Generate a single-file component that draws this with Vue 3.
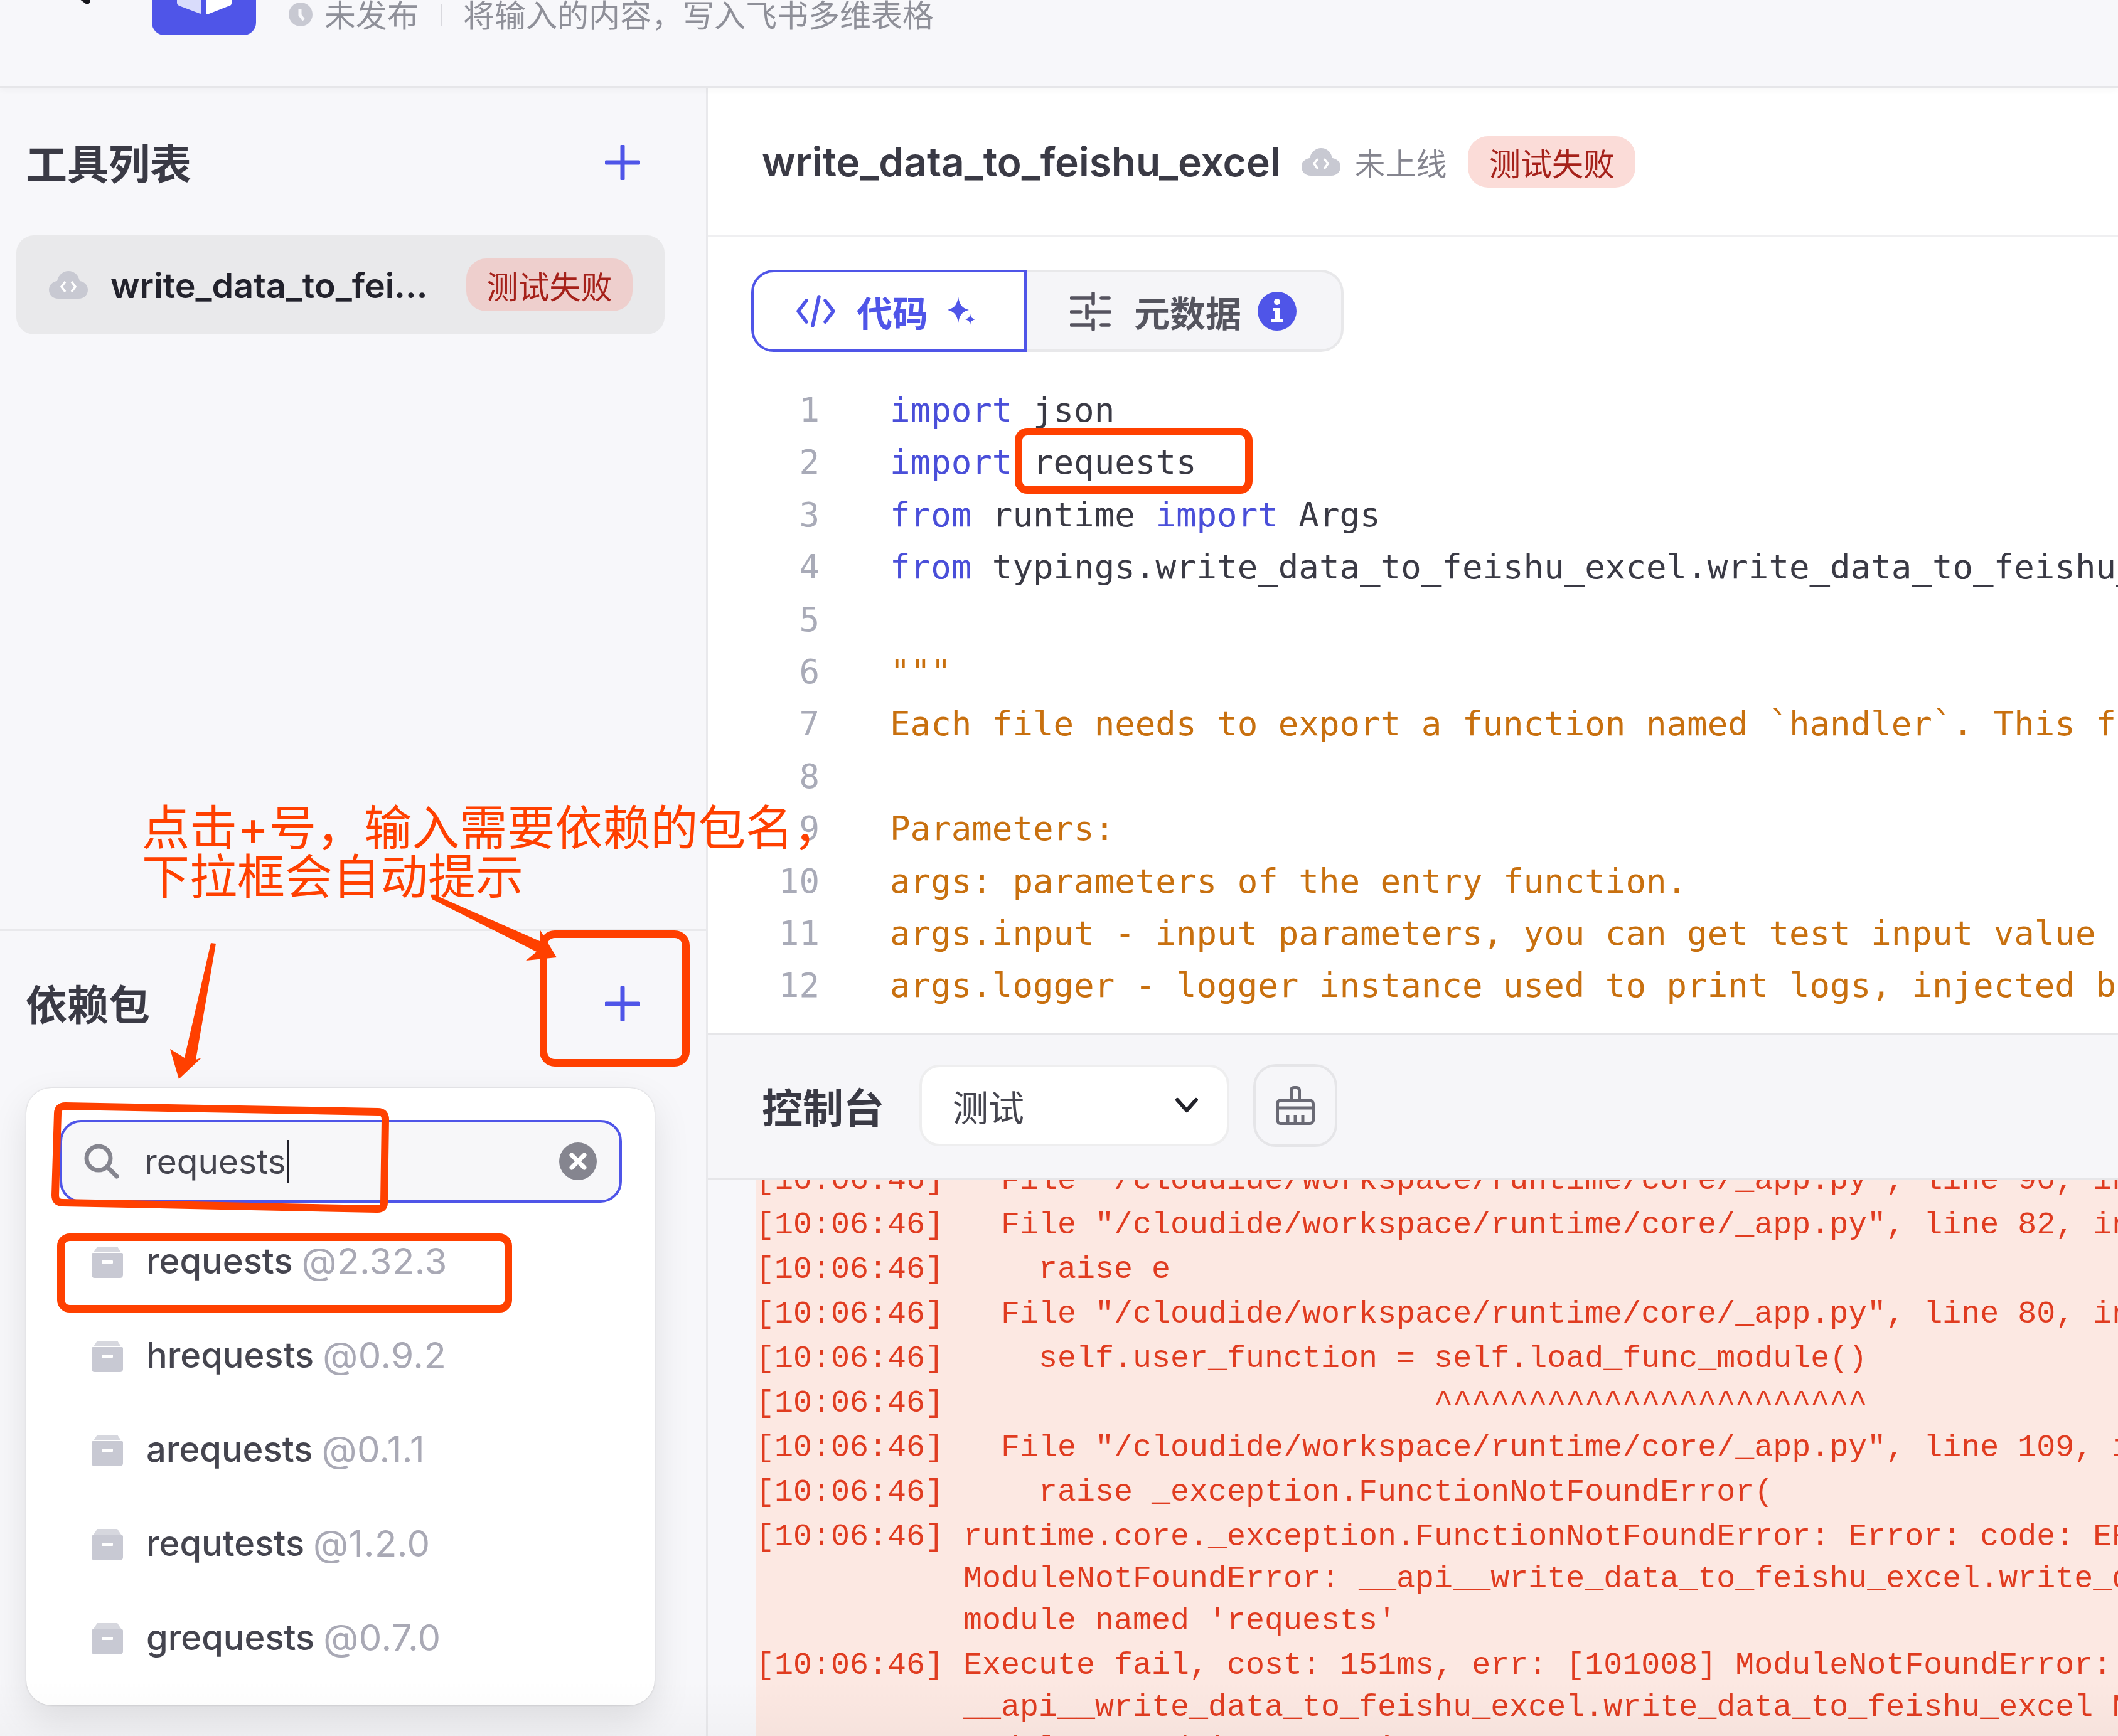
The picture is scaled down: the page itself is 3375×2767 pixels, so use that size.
<script setup>
const S = 'str'
const K = 'kw'
const code = [
  [['import', K], [' json']],
  [['import', K], [' requests']],
  [['from', K], [' runtime '], ['import', K], [' Args']],
  [['from', K], [' typings.write_data_to_feishu_excel.write_data_to_feishu_excel '], ['import', K], [' Input']],
  [],
  [['"""', S]],
  [['Each file needs to export a function named `handler`. This function is the entrance to the Tool.', S]],
  [],
  [['Parameters:', S]],
  [['args: parameters of the entry function.', S]],
  [['args.input - input parameters, you can get test input value by args.input.xxx.', S]],
  [['args.logger - logger instance used to print logs, injected by runtime.', S]]
]
const logs = [
  ['  File "/cloudide/workspace/runtime/core/_app.py", line 90, in __init__'],
  ['  File "/cloudide/workspace/runtime/core/_app.py", line 82, in __init__'],
  ['    raise e'],
  ['  File "/cloudide/workspace/runtime/core/_app.py", line 80, in __init__'],
  ['    self.user_function = self.load_func_module()'],
  ['                         ^^^^^^^^^^^^^^^^^^^^^^^'],
  ['  File "/cloudide/workspace/runtime/core/_app.py", line 109, in load_func_module'],
  ['    raise _exception.FunctionNotFoundError('],
  ['runtime.core._exception.FunctionNotFoundError: Error: code: ERR_FUNCTION_NOT_FOUND',
   'ModuleNotFoundError: __api__write_data_to_feishu_excel.write_data_to_feishu_excel No',
   "module named 'requests'"],
  ['Execute fail, cost: 151ms, err: [101008] ModuleNotFoundError:',
   '__api__write_data_to_feishu_excel.write_data_to_feishu_excel No',
   "module named 'requests'"]
]
const pkgs = [
  ['requests', '@2.32.3'],
  ['hrequests', '@0.9.2'],
  ['arequests', '@0.1.1'],
  ['requtests', '@1.2.0'],
  ['grequests', '@0.7.0']
]
</script>

<template>
  <div class="page">
    <header class="top">
      <svg class="back" width="40" height="12" viewBox="0 0 40 12"><path d="M8 -6 L19 2" stroke="#16161c" stroke-width="9" stroke-linecap="round" fill="none"/></svg>
      <div class="logo">
        <svg width="87" height="24" viewBox="0 0 87 24"><path d="M0 0H39V22L36 21.5L3 9Q0 7 0 5Z" fill="#d9dcfb"/><path d="M47 0H87V5Q87 8 84 9L51 22L47 22Z" fill="#fff"/></svg>
      </div>
      <svg class="clock" width="38" height="38" viewBox="0 0 38 38"><circle cx="19" cy="19" r="19" fill="#c8c9d2"/><path d="M18 10V20L24 28" stroke="#f7f7fa" stroke-width="5" fill="none"/></svg>
      <span class="status">未发布</span>
      <i class="sep"></i>
      <span class="desc">将输入的内容&#65292;写入飞书多维表格</span>
    </header>

    <div class="body">
      <aside class="side">
        <section class="tools">
          <div class="side-head tools-head">
            <h2>工具列表</h2>
            <svg class="plus" width="56" height="56" viewBox="0 0 56 56"><path d="M28 2V54M2 28H54" stroke="#4f55e8" stroke-width="7" stroke-linecap="round"/></svg>
          </div>
          <div class="tool">
            <svg width="62" height="44" viewBox="0 0 62 44"><path d="M15 44C5 44 0 37 0 30C0 22 6 17 13 16C15 6 23 0 31 0C40 0 47 6 49 16C56 17 62 22 62 30C62 37 57 44 47 44Z" fill="#c8c9d2"/><path d="M26 17L20 25L26 33M36 17L42 25L36 33" stroke="#fff" stroke-width="3.5" fill="none"/></svg>
            <span class="tool-name">write_data_to_fei...</span>
            <span class="badge tool-badge">测试失败</span>
          </div>
        </section>
        <section class="deps">
          <div class="side-head deps-head">
            <h2>依赖包</h2>
            <svg class="plus" width="56" height="56" viewBox="0 0 56 56"><path d="M28 2V54M2 28H54" stroke="#4f55e8" stroke-width="7" stroke-linecap="round"/></svg>
          </div>
          <div class="popup">
            <div class="search">
              <svg width="60" height="60" viewBox="0 0 60 60"><circle cx="25" cy="25" r="19" stroke="#85858f" stroke-width="7" fill="none"/><path d="M39 39L54 54" stroke="#85858f" stroke-width="7" stroke-linecap="round"/></svg>
              <span class="query">requests</span>
              <svg class="clear" width="60" height="60" viewBox="0 0 60 60"><circle cx="30" cy="30" r="30" fill="#85858f"/><path d="M20 20L40 40M40 20L20 40" stroke="#fff" stroke-width="7" stroke-linecap="round"/></svg>
            </div>
            <ul class="pkgs">
              <li v-for="p in pkgs" :key="p[0]" class="pkg">
                <svg width="50" height="50" viewBox="0 0 50 50"><path d="M9 0H41L47 9H3Z" fill="#d6d7de"/><path d="M0 12Q0 10 2 10H48Q50 10 50 12V45Q50 50 45 50H5Q0 50 0 45Z" fill="#c8c9d3"/><rect x="16" y="22" width="18" height="5" rx="1" fill="#fff"/></svg>
                <span class="pkg-name">{{ p[0] }}</span>
                <span class="pkg-ver">{{ p[1] }}</span>
              </li>
            </ul>
          </div>
        </section>
      </aside>

      <main class="main">
        <div class="head">
          <h1>write_data_to_feishu_excel</h1>
          <svg width="62" height="44" viewBox="0 0 62 44"><path d="M15 44C5 44 0 37 0 30C0 22 6 17 13 16C15 6 23 0 31 0C40 0 47 6 49 16C56 17 62 22 62 30C62 37 57 44 47 44Z" fill="#c8c9d2"/><path d="M26 17L20 25L26 33M36 17L42 25L36 33" stroke="#fff" stroke-width="3.5" fill="none"/></svg>
          <span class="online">未上线</span>
          <span class="badge head-badge">测试失败</span>
        </div>
        <div class="editor">
          <div class="tabs">
            <div class="tab active">
              <svg width="62" height="54" viewBox="0 0 62 54"><path d="M16 10L3 27L16 44M46 10L59 27L46 44M36 4L26 50" stroke="#4f55e8" stroke-width="5.5" fill="none" stroke-linecap="round" stroke-linejoin="round"/></svg>
              <span>代码</span>
              <svg width="46" height="46" viewBox="0 0 46 46"><path d="M18 0C20 13 24 18 35 21C24 24 20 29 18 42C16 29 12 24 1 21C12 18 16 13 18 0Z" fill="#4f55e8"/><path d="M37 27C38 33 39 34 45 36C39 38 38 39 37 45C36 39 35 38 29 36C35 34 36 33 37 27Z" fill="#4f55e8"/></svg>
            </div>
            <div class="tab">
              <svg width="66" height="62" viewBox="0 0 66 62" stroke-linecap="round"><path d="M2 10H34M37 2V19M50 10H62M2 32H17M27 22V42M27 32H64M2 53H34M37 45V60M50 53H62" stroke="#55535f" stroke-width="5.5" fill="none"/></svg>
              <span>元数据</span>
              <svg width="62" height="62" viewBox="0 0 62 62"><circle cx="31" cy="31" r="31" fill="#4f55e8"/><circle cx="31" cy="16" r="5" fill="#fff"/><path d="M24 26H35V43H40V48H22V43H28V31H24Z" fill="#fff"/></svg>
            </div>
          </div>
          <div class="code">
            <div v-for="(line, i) in code" :key="i" class="line">
              <span class="num">{{ i + 1 }}</span>
              <span class="src"><span v-for="(tok, j) in line" :key="j" :class="tok[1]">{{ tok[0] }}</span></span>
            </div>
          </div>
        </div>
        <div class="console">
          <div class="bar">
            <h2>控制台</h2>
            <div class="select">
              <span>测试</span>
              <svg width="36" height="26" viewBox="0 0 36 26"><path d="M3 4L18 21L33 4" stroke="#22222a" stroke-width="6" fill="none" stroke-linecap="round" stroke-linejoin="round"/></svg>
            </div>
            <div class="clean">
              <svg width="62" height="62" viewBox="0 0 62 62"><path d="M24.5 23V7Q24.5 2.5 29 2.5H33Q37.5 2.5 37.5 7V23" stroke="#6a6a75" stroke-width="5" fill="none"/><rect x="2.5" y="23" width="57" height="36.5" rx="5" stroke="#6a6a75" stroke-width="5" fill="none"/><path d="M2.5 35H59.5M19 59V46M31 59V46M43 59V46" stroke="#6a6a75" stroke-width="5" fill="none"/></svg>
            </div>
          </div>
          <div class="log">
            <div class="log-inner">
              <div v-for="(row, i) in logs" :key="i" class="log-row">
                <span class="time">[10:06:46]</span>
                <div class="msg"><div v-for="(m, j) in row" :key="j" class="msg-line">{{ m }}</div></div>
              </div>
            </div>
          </div>
        </div>
      </main>
    </div>

    <div class="note">点击+号&#65292;输入需要依赖的包名&#65292;<br>下拉框会自动提示</div>
    <svg class="marks" width="3375" height="2767" viewBox="0 0 3375 2767">
      <g fill="none" stroke="#ff4000" stroke-width="12" stroke-linejoin="round">
        <rect x="1623" y="688" width="367" height="93" rx="14"/>
        <rect x="866" y="1489" width="227" height="205" rx="18"/>
        <path d="M104 1763L602 1772Q614 1772 614 1784L612 1917Q612 1928 600 1927L100 1917Q88 1917 88 1905L92 1775Q92 1763 104 1763Z"/>
        <rect x="97" y="1972" width="713" height="114" rx="14"/>
      </g>
      <g fill="#ff4000">
        <path d="M692 1426L860 1500L861 1483L887 1526L838 1531L855 1517L688 1433Z"/>
        <path d="M336 1503L344 1504L312 1689L321 1686L285 1720L271 1672L294 1686Z"/>
      </g>
    </svg>
    <i class="fade"></i>
  </div>
</template>

<style scoped>
.page {
  position: relative;
  width: 3375px;
  height: 2767px;
  overflow: hidden;
  display: flex;
  flex-direction: column;
  background: #f7f7fa;
  font-family: Inter, "Noto Sans CJK SC", sans-serif;
  color: #3a3a45;
}
h1, h2, ul { margin: 0; padding: 0; }
i { font-style: normal; display: block; }

.top {
  height: 140px;
  flex: none;
  box-sizing: border-box;
  border-bottom: 3px solid #e6e6e9;
  box-shadow: 0 4px 10px rgba(0, 0, 0, .03);
  display: flex;
  align-items: flex-start;
  padding-left: 120px;
  color: #8f9099;
  font-size: 50px;
  position: relative;
  z-index: 2;
  background: #f7f7fa;
}
.back { flex: none; }
.logo {
  width: 166px;
  height: 56px;
  flex: none;
  margin-left: 82px;
  background: #4f55e8;
  border-radius: 0 0 20px 20px;
  padding-left: 40px;
  box-sizing: border-box;
}
.logo svg { display: block; }
.clock { flex: none; margin-left: 52px; margin-top: 4px; }
.status { margin-left: 19px; line-height: 50px; }
.sep { width: 3px; height: 34px; background: #d9d9de; margin: 7px 36px 0 35px; }
.desc { line-height: 50px; margin-left: -3px; }

.body { flex: 1; display: flex; min-height: 0; }
.side {
  width: 1128px;
  flex: none;
  box-sizing: border-box;
  border-right: 3px solid #e9e9ec;
  display: flex;
  flex-direction: column;
}
.tools { flex: 1; }
.side-head {
  display: flex;
  align-items: center;
  justify-content: space-between;
  padding: 0 103px 0 41px;
  box-sizing: border-box;
}
.side-head h2 { font-size: 66px; font-weight: 600; color: #3a3a45; margin-top: -6px; }
.tools-head { height: 235px; padding-top: 4px; }
.deps-head { height: 236px; padding-bottom: 4px; }
.tools-head .plus { margin-top: -2px; }
.plus { flex: none; margin-right: 2px; }
.tool {
  margin: 0 66px 0 26px;
  height: 158px;
  background: #e9e9eb;
  border-radius: 28px;
  display: flex;
  align-items: center;
  padding: 0 51px 0 52px;
  box-sizing: border-box;
}
.tool svg { flex: none; }
.tool-name {
  margin-left: 36px;
  font-size: 55.5px;
  font-weight: 600;
  color: #22222c;
  flex: 1;
  white-space: nowrap;
}
.badge {
  background: #eecfcd;
  color: #a5211a;
  font-size: 50px;
  border-radius: 32px;
  display: flex;
  align-items: center;
  justify-content: center;
  flex: none;
}
.tool-badge { width: 265px; height: 84px; margin-left: -4px; }
.head-badge { width: 267px; height: 82px; background: #fbdcd8; margin-left: 34px; }

.deps {
  height: 1286px;
  flex: none;
  box-sizing: border-box;
  border-top: 3px solid #e9e9ec;
}
.popup {
  margin: 14px 0 0 42px;
  width: 1001px;
  height: 984px;
  background: #fff;
  border-radius: 40px;
  box-shadow: 0 0 3px rgba(0, 0, 0, .18), 0 24px 60px rgba(0, 0, 0, .1);
  padding: 51px 52px 0 53px;
  box-sizing: border-box;
}
.search {
  height: 132px;
  box-sizing: border-box;
  border: 4px solid #4f55e8;
  border-radius: 34px;
  background: #f7f7f9;
  display: flex;
  align-items: center;
  padding: 0 36px 0 33px;
}
.search svg { flex: none; }
.query {
  margin-left: 38px;
  font-size: 55px;
  color: #45454f;
  border-right: 3px solid #22222c;
  line-height: 68px;
  padding-right: 1px;
}
.clear { margin-left: auto; }
.pkgs { list-style: none; margin-top: 20px; }
.pkg {
  height: 150px;
  display: flex;
  align-items: center;
  padding-left: 51px;
  font-size: 56px;
}
.pkg svg { flex: none; margin-right: 37px; }
.pkg-name { font-weight: 500; color: #45454f; margin-bottom: 4px; }
.pkg-ver { margin: 0 0 4px 14px; color: #a9a9b5; font-size: 58px; letter-spacing: .5px; }

.main { flex: 1; min-width: 0; background: #fff; display: flex; flex-direction: column; }
.head {
  height: 238px;
  flex: none;
  box-sizing: border-box;
  border-bottom: 3px solid #efeff1;
  display: flex;
  align-items: center;
  padding-left: 86px;
}
.head h1 { font-size: 64px; font-weight: 600; color: #3a3a45; white-space: nowrap; }
.head svg { flex: none; margin-left: 34px; }
.online { margin-left: 22px; font-size: 49px; color: #85858f; }

.editor { height: 1271px; flex: none; box-sizing: border-box; border-bottom: 3px solid #e6e6e9; overflow: hidden; }
.tabs { display: flex; margin: 52px 0 0 69px; height: 131px; }
.tab {
  display: flex;
  align-items: center;
  box-sizing: border-box;
  font-size: 57px;
  font-weight: 600;
}
.tab.active {
  width: 439px;
  border: 4px solid #4f55e8;
  border-radius: 36px 0 0 36px;
  color: #4f55e8;
  padding-left: 68px;
  gap: 34px;
}
.tab.active svg:last-child { margin-left: -4px; }
.tab:not(.active) {
  width: 505px;
  border: 4px solid #e8e8ea;
  border-left: 0;
  border-radius: 0 36px 36px 0;
  background: #f5f5f8;
  color: #55555f;
  padding-left: 69px;
}
.tab:not(.active) span { margin: 0 26px 0 36px; }
.code { margin-top: 51px; font-family: "DejaVu Sans Mono", monospace; font-size: 54.1px; }
.line { height: 83.4px; line-height: 83.4px; display: flex; white-space: pre; }
.num { width: 178px; text-align: right; color: #a9abb8; flex: none; }
.src { margin-left: 112px; color: #3a3a45; }
.kw { color: #4a4fd9; }
.str { color: #c8700f; }

.console { flex: 1; min-height: 0; display: flex; flex-direction: column; background: #f7f7fa; }
.bar {
  height: 232px;
  flex: none;
  box-sizing: border-box;
  border-bottom: 3px solid #e6e6e9;
  display: flex;
  align-items: center;
  padding: 0 0 4px 86px;
  background: #f6f6f9;
  position: relative;
  z-index: 1;
}
.bar h2 { font-size: 65px; font-weight: 600; color: #3a3a45; }
.select {
  margin-left: 56px;
  width: 494px;
  height: 130px;
  box-sizing: border-box;
  border: 4px solid #eeeeef;
  border-radius: 32px;
  background: #fff;
  display: flex;
  align-items: center;
  justify-content: space-between;
  padding: 0 46px 0 49px;
  font-size: 57px;
  color: #45454f;
}
.clean {
  margin-left: 38px;
  width: 134px;
  height: 132px;
  box-sizing: border-box;
  border: 4px solid #e5e5e8;
  border-radius: 36px;
  display: flex;
  align-items: center;
  justify-content: center;
}
.log { flex: 1; min-height: 0; margin-left: 76px; background: #fce8e2; overflow: hidden; }
.log-inner {
  margin-top: -35px;
  font-family: "Liberation Mono", monospace;
  font-size: 50px;
  color: #e03c20;
  white-space: pre;
}
.log-row { display: flex; padding: 2px 0; }
.time { width: 331px; flex: none; line-height: 67px; }
.msg-line { height: 67px; line-height: 67px; }

.note {
  position: absolute;
  left: 226px;
  top: 1280px;
  font-size: 76px;
  line-height: 78px;
  color: #ff4000;
  white-space: nowrap;
  z-index: 5;
}
.marks { position: absolute; left: 0; top: 0; z-index: 6; pointer-events: none; }
.fade {
  position: absolute;
  left: 0;
  right: 0;
  bottom: 0;
  height: 90px;
  background: linear-gradient(rgba(0, 0, 0, 0), rgba(0, 0, 0, .025));
  z-index: 4;
}
</style>
